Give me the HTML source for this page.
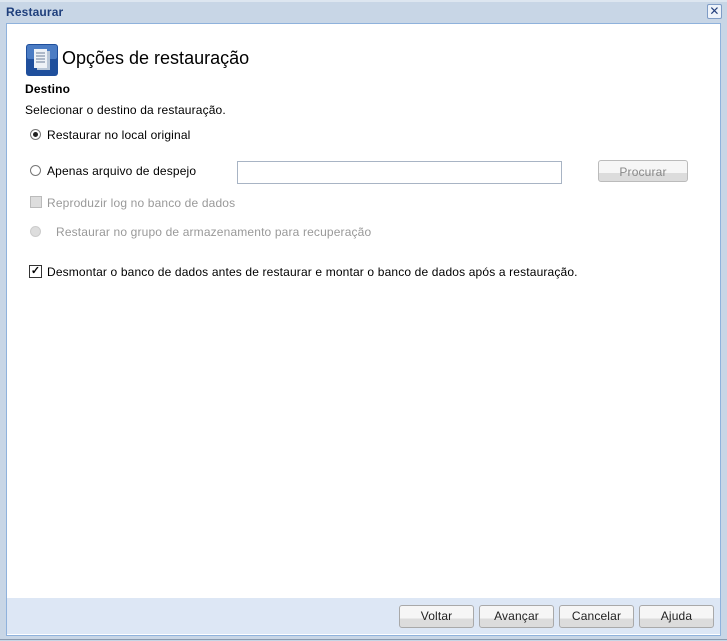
<!DOCTYPE html><html><head><style>
body{margin:0;width:727px;height:641px;background:#c8d6e6;font-family:"Liberation Sans",Tahoma,sans-serif;font-size:12px;position:relative;overflow:hidden;letter-spacing:0.15px}
.a{position:absolute}
.panel{left:6px;top:23px;width:713px;height:611px;border:1px solid #8fb2dc;background:#fff}
.foot{left:7px;top:598px;width:713px;height:36px;background:#dde7f5}
.btn{position:absolute;top:605px;width:73px;height:21px;border:1px solid #a9a9a9;border-radius:3px;background:linear-gradient(#f6f6f6 0,#f6f6f6 60%,#dcdcdc 60%,#dcdcdc 100%);text-align:center;line-height:21px;font-size:12px;color:#222}
.rad{position:absolute;width:9px;height:9px;border:1px solid #777;border-radius:50%;background:#fff}
.t{position:absolute;white-space:nowrap}
.g{color:#999}
</style></head><body>
<div class="a" style="left:0;top:0;width:727px;height:2px;background:#dde6f0"></div>
<div class="t" style="left:6px;top:5px;font-weight:bold;color:#1f3f7c;font-size:12px">Restaurar</div>
<div class="a" style="left:707px;top:4px;width:13px;height:13px;border:1px solid #7f9cc6;border-radius:2px;background:#eef3fa;color:#233f7c;font-size:12px;line-height:13px;text-align:center">✕</div>
<div class="a panel"></div>
<div class="a foot"></div>
<div class="a" style="left:0;top:639px;width:727px;height:1px;background:#8a9bb0"></div>
<svg class="a" style="left:26px;top:44px" width="32" height="32"><rect width="32" height="32" rx="3" fill="#1f4f9c"/><rect x="1" y="1" width="30" height="14" rx="2" fill="#4b7cc4"/><rect x="11" y="7" width="13" height="19" fill="#b9c7d8"/><rect x="8" y="5" width="13" height="19" fill="#eef2f7"/><g stroke="#6c7f99" stroke-width="1"><line x1="10" y1="9" x2="19" y2="9"/><line x1="10" y1="12" x2="19" y2="12"/><line x1="10" y1="15" x2="19" y2="15"/><line x1="10" y1="18" x2="19" y2="18"/></g></svg>
<div class="t" style="left:62px;top:48px;font-size:18px;letter-spacing:0">Opções de restauração</div>
<div class="t" style="left:25px;top:82px;font-weight:bold;font-size:12px">Destino</div>
<div class="t" style="left:25px;top:103px">Selecionar o destino da restauração.</div>
<div class="rad" style="left:30px;top:129px"><div style="position:absolute;left:2px;top:2px;width:5px;height:5px;border-radius:50%;background:#222"></div></div>
<div class="t" style="left:47px;top:128px">Restaurar no local original</div>
<div class="rad" style="left:30px;top:165px"></div>
<div class="t" style="left:47px;top:164px">Apenas arquivo de despejo</div>
<div class="a" style="left:237px;top:161px;width:323px;height:21px;border:1px solid #a8b4c4;background:#fff"></div>
<div class="btn" style="left:598px;top:160px;width:88px;height:20px;line-height:22px;color:#888;border-color:#bbb">Procurar</div>
<div class="a" style="left:30px;top:196px;width:10px;height:10px;border:1px solid #bbb;background:#ddd"></div>
<div class="t g" style="left:47px;top:196px">Reproduzir log no banco de dados</div>
<div class="rad" style="left:30px;top:226px;border-color:#ccc;background:#ddd"></div>
<div class="t g" style="left:56px;top:225px">Restaurar no grupo de armazenamento para recuperação</div>
<div class="a" style="left:29px;top:265px;width:11px;height:11px;border:1px solid #333;background:#fff;font-size:11px;line-height:11px;text-align:center;font-weight:bold">✓</div>
<div class="t" style="left:47px;top:265px">Desmontar o banco de dados antes de restaurar e montar o banco de dados após a restauração.</div>
<div class="btn" style="left:399px">Voltar</div>
<div class="btn" style="left:479px">Avançar</div>
<div class="btn" style="left:559px">Cancelar</div>
<div class="btn" style="left:639px">Ajuda</div>
</body></html>
